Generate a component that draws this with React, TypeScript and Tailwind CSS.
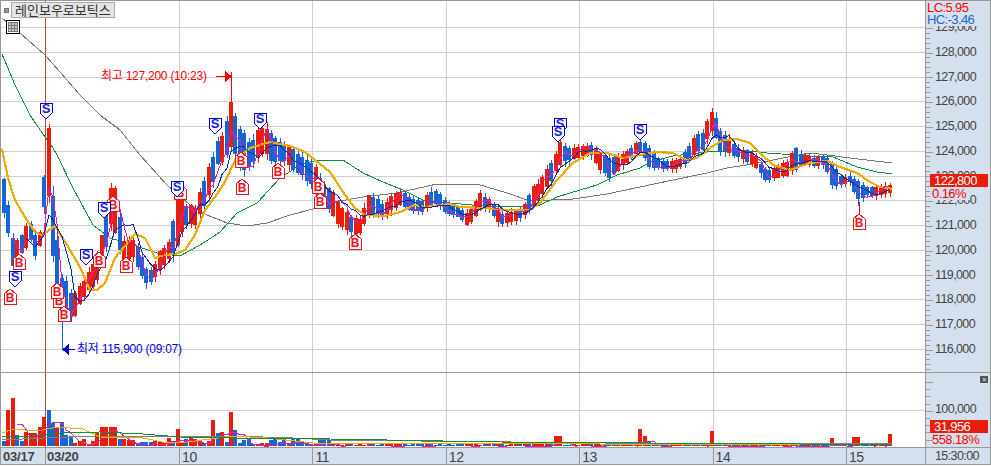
// price chart: traced envelope + seeded candles, all in page coordinates
const RED = "#ea1c0a";
const BLUE = "#1664d6";
const FONT = "font-['Liberation_Sans','Noto_Sans_CJK_KR',sans-serif]";

type P = [number, number];

const env: [number, number, number][] = [
  [2, 172, 212], [7, 190, 225], [9, 212, 248], [13, 235, 268], [19, 242, 258], [26, 225, 248], [31, 222, 240],
  [35, 232, 258], [42, 232, 242], [46, 120, 180], [49, 125, 200], [52, 175, 250], [56, 225, 290], [60, 275, 305],
  [66, 278, 320], [73, 295, 320], [80, 285, 305], [88, 272, 292], [96, 255, 285], [102, 235, 265], [108, 195, 240],
  [113, 178, 222], [118, 200, 250], [124, 238, 262], [132, 236, 258], [138, 245, 270], [146, 268, 285], [153, 268, 282],
  [160, 250, 272], [168, 245, 262], [174, 215, 258], [180, 188, 240], [186, 205, 225], [195, 205, 225], [203, 182, 212],
  [212, 158, 190], [218, 138, 165], [225, 130, 160], [231, 95, 150], [236, 118, 155], [242, 130, 175], [250, 140, 170],
  [257, 130, 160], [265, 120, 155], [272, 135, 165], [282, 142, 162], [292, 148, 170], [303, 155, 178], [313, 160, 190],
  [322, 180, 205], [332, 190, 215], [340, 205, 228], [350, 215, 235], [360, 218, 234], [367, 195, 217], [376, 195, 215],
  [384, 205, 218], [393, 192, 210], [402, 190, 205], [412, 198, 212], [422, 200, 213], [431, 190, 207], [438, 190, 205],
  [448, 203, 215], [458, 205, 217], [467, 212, 226], [473, 205, 222], [480, 192, 210], [490, 200, 210], [500, 212, 226],
  [507, 212, 225], [515, 210, 222], [524, 205, 218], [532, 187, 207], [540, 180, 200], [548, 165, 187], [555, 155, 175],
  [560, 140, 165], [567, 148, 162], [580, 146, 158], [592, 143, 156], [600, 152, 172], [609, 155, 178], [617, 155, 172],
  [625, 152, 165], [635, 142, 155], [642, 140, 152], [648, 145, 167], [660, 160, 170], [672, 160, 170], [682, 157, 167],
  [696, 132, 155], [704, 130, 150], [710, 108, 132], [715, 112, 135], [720, 128, 152], [728, 135, 155], [737, 147, 158],
  [750, 150, 163], [758, 158, 170], [766, 170, 182], [778, 165, 178], [788, 160, 177], [795, 147, 172], [803, 155, 165],
  [815, 157, 167], [825, 155, 166], [831, 162, 188], [842, 177, 184], [850, 175, 183], [858, 180, 202], [868, 187, 196],
  [878, 187, 197], [889, 184, 193],
];

const orange: P[] = [
  [2, 149], [8, 178], [15, 200], [25, 217], [35, 232], [42, 235], [55, 226], [62, 237], [70, 250], [80, 267], [90, 290],
  [97, 290], [105, 283], [115, 258], [120, 252], [135, 234], [145, 238], [155, 258], [165, 255], [175, 254], [185, 250],
  [195, 235], [205, 210], [215, 197], [225, 182], [235, 160], [250, 148], [270, 142], [290, 146], [305, 152], [315, 160],
  [330, 172], [345, 195], [355, 208], [365, 215], [385, 216], [400, 212], [415, 205], [425, 207], [450, 204], [460, 207],
  [485, 208], [505, 210], [530, 210], [540, 203], [557, 180], [573, 163], [590, 153], [607, 153], [623, 158], [640, 155],
  [657, 152], [673, 153], [687, 160], [697, 158], [710, 148], [723, 140], [737, 139], [750, 143], [760, 153], [773, 165],
  [790, 170], [810, 163], [827, 161], [840, 167], [857, 173], [870, 182], [880, 187], [892, 189],
];

const green: P[] = [
  [2, 54], [15, 85], [30, 115], [45, 137], [53, 148], [57, 155], [73, 188], [93, 225], [110, 238], [133, 245], [157, 253],
  [180, 256], [200, 245], [220, 232], [237, 213], [257, 203], [280, 178], [300, 165], [317, 160], [343, 160], [363, 173],
  [383, 182], [403, 190], [423, 200], [450, 203], [483, 206], [513, 207], [540, 205], [557, 197], [580, 190], [597, 185],
  [617, 175], [640, 168], [650, 162], [673, 156], [707, 152], [740, 150], [767, 153], [810, 156], [833, 157], [857, 167],
  [877, 172], [892, 174],
];

const gray: P[] = [
  [2, 18], [20, 33], [45, 55], [60, 72], [80, 95], [100, 115], [120, 130], [140, 155], [167, 185], [190, 205], [207, 215],
  [227, 223], [247, 226], [267, 223], [290, 215], [317, 208], [340, 201], [363, 197], [397, 193], [437, 184], [477, 184],
  [507, 193], [530, 201], [573, 199], [607, 194], [640, 187], [673, 180], [707, 173], [727, 168], [753, 164], [783, 158],
  [810, 153], [827, 155], [850, 158], [892, 163],
];

const volGreen: P[] = [[2, 437], [33, 436], [60, 433], [100, 432], [143, 434], [180, 437], [233, 438], [330, 439], [500, 442], [800, 444], [892, 444]];
const volOrange: P[] = [[2, 433], [13, 429], [37, 431], [57, 427], [83, 429], [100, 437], [143, 438], [167, 443], [187, 442], [233, 436], [267, 438], [313, 443], [330, 443], [600, 444], [892, 445]];
const volGray: P[] = [[2, 440], [43, 438], [100, 436], [143, 436], [233, 436], [293, 438], [330, 440], [600, 443], [892, 444]];

// x, top of bar, red?
const volSpikes: [number, number, boolean][] = [
  [8, 410, true], [11, 398, true], [14, 420, false], [17, 435, false], [25, 432, true], [33, 433, true], [39, 427, true],
  [42, 417, true], [46, 386, true], [49, 410, false], [52, 423, false], [55, 427, true], [59, 420, true], [63, 422, false],
  [67, 435, false], [70, 436, false], [99, 432, true], [104, 427, true], [109, 427, true], [115, 427, true], [179, 429, true],
  [215, 420, true], [218, 433, false], [224, 432, true], [232, 412, true], [235, 430, false], [558, 436, true], [640, 429, true],
  [646, 436, true], [710, 431, true], [833, 438, true], [856, 437, true], [891, 434, true],
];

// colours that matter around the big moves
const forced: [number, number, boolean][] = [
  [44, 47, true], [48, 60, false], [107, 114, true], [226, 231, true], [232, 238, false], [557, 561, true], [705, 712, true], [713, 718, false],
];

const seed = (s: number) => () => {
  s = (s + 0x6d2b79f5) | 0;
  let t = Math.imul(s ^ (s >>> 15), 1 | s);
  t = (t + Math.imul(t ^ (t >>> 7), 61 | t)) ^ t;
  return ((t ^ (t >>> 14)) >>> 0) / 4294967296;
};

const lerpEnv = (x: number) => {
  for (let i = 0; i < env.length - 1; i++) {
    const a = env[i];
    const b = env[i + 1];
    if (x <= b[0]) {
      const t = Math.max(0, (x - a[0]) / (b[0] - a[0]));
      return [a[1] + (b[1] - a[1]) * t, a[2] + (b[2] - a[2]) * t];
    }
  }
  return [env[env.length - 1][1], env[env.length - 1][2]];
};

const rnd = seed(77);
const candles = Array.from({ length: 200 }).map((_, i) => {
  const x = Math.round(2 + i * 4.45);
  const [top, bot] = lerpEnv(x + 2);
  const [pt, pb] = lerpEnv(x - 3);
  const [nt, nb] = lerpEnv(x + 7);
  const rising = nt + nb < pt + pb;
  const f = forced.find((r) => x >= r[0] && x <= r[1]);
  const up = f ? f[2] : rnd() < (rising ? 0.62 : 0.25);
  const h = bot - top;
  const bodyTop = Math.round(top + rnd() * h * 0.14);
  const bodyBot = Math.round(bot - rnd() * h * 0.14);
  return { x, top: Math.round(top - rnd() * 3), bot: Math.round(bot + rnd() * 4), bodyTop, bodyBot, up, close: up ? bodyTop : bodyBot };
});

const ma = (period: number) =>
  candles
    .map((c, i) => {
      if (i < period - 1) return "";
      const s = candles.slice(i - period + 1, i + 1).reduce((a, v) => a + v.close, 0) / period;
      return `${c.x + 2},${s.toFixed(1)}`;
    })
    .filter(Boolean)
    .join(" ");

const volRnd = seed(21);
const volumes = candles.map((c) => {
  const spike = volSpikes.find((s) => Math.abs(s[0] - c.x - 2) <= 2);
  const left = c.x < 330;
  const base = left ? 446 - (2 + volRnd() * 6) : 446 - (1 + volRnd() * 2);
  return { x: c.x, y: spike ? spike[1] : Math.round(base), up: spike ? spike[2] : c.up };
});

const volMa = volumes
  .map((v, i) => {
    if (i < 3) return "";
    const s = volumes.slice(i - 3, i + 1).reduce((a, b) => a + b.y, 0) / 4;
    return `${v.x + 2},${(s + 3).toFixed(1)}`;
  })
  .filter(Boolean)
  .join(" ");

const pts = (a: P[]) => a.map((p) => p.join(",")).join(" ");

const gridX = [179, 312, 446, 579, 713, 846];
const gridY = Array.from({ length: 14 }).map((_, i) => Math.round(27 + i * 24.75));

function SMark({ x, y }: { x: number; y: number }) {
  return (
    <g>
      <polygon points={`${x - 6},${y - 16} ${x + 6},${y - 16} ${x + 6},${y - 6} ${x},${y} ${x - 6},${y - 6}`} fill="#fff" stroke="#0000e0" />
      <text x={x} y={y - 6} textAnchor="middle" fontSize="13" fontWeight="700" fill="#1a1ae6">S</text>
    </g>
  );
}

function BMark({ x, y, stem }: { x: number; y: number; stem?: number }) {
  return (
    <g>
      {stem ? <line x1={x} x2={x} y1={stem} y2={y} stroke="#f00" /> : null}
      <polygon points={`${x},${y} ${x + 6},${y + 5} ${x + 6},${y + 15} ${x - 6},${y + 15} ${x - 6},${y + 5}`} fill="#fff" stroke="#f0101a" />
      <text x={x} y={y + 13} textAnchor="middle" fontSize="12" fontWeight="700" fill="#f0101a">B</text>
    </g>
  );
}

function PriceChart() {
  return (
    <svg viewBox="1 1 924 371" className="block w-[924px] h-[371px]" shapeRendering="crispEdges">
      {gridY.map((y) => (
        <line key={y} x1="1" x2="925" y1={y + 0.5} y2={y + 0.5} stroke="#d0d0d0" />
      ))}
      {gridX.map((x) => (
        <line key={x} x1={x + 0.5} x2={x + 0.5} y1="1" y2="372" stroke="#d0d0d0" />
      ))}
      <line x1="45.5" x2="45.5" y1="1" y2="372" stroke="#d04030" />
      <polyline points={pts(gray)} fill="none" stroke="#777" strokeWidth="1" />
      <polyline points={pts(green)} fill="none" stroke="#0f8f3c" strokeWidth="1" />
      {candles.map((c, i) => (
        <g key={i} fill={c.up ? RED : BLUE}>
          <rect x={c.x + 1.5} y={c.top} width="1" height={c.bot - c.top} />
          <rect x={c.x} y={c.bodyTop} width="4" height={Math.max(3, c.bodyBot - c.bodyTop)} />
        </g>
      ))}
      <polyline points={pts(orange)} fill="none" stroke="#f0ab00" strokeWidth="2.2" />
      <polyline points={ma(3)} fill="none" stroke="#e020b0" strokeWidth="1" />
      <polyline points={ma(6)} fill="none" stroke="#0a2ca0" strokeWidth="1" />

      {/* high / low callouts */}
      <line x1="231.5" x2="231.5" y1="72" y2="96" stroke="#f00" />
      <line x1="216" x2="226" y1="76.5" y2="76.5" stroke="#f00" />
      <polygon points="225,71 232,76.5 225,82" fill="#f00" />
      <text x="101" y="80" fontSize="12" letterSpacing="-0.25" fill="#f00">최고 127,200 (10:23)</text>
      <line x1="62.5" x2="62.5" y1="320" y2="350" stroke={BLUE} />
      <line x1="65" x2="75" y1="349.5" y2="349.5" stroke="#0000e0" />
      <polygon points="69,344 62,349.5 69,355" fill="#0000e0" />
      <text x="77" y="353" fontSize="12" letterSpacing="-0.25" fill="#0000e0">최저 115,900 (09:07)</text>

      <BMark x={180} y={184} />
      <BMark x={113} y={196} />
      <BMark x={59} y={292} />
      <BMark x={64} y={306} />
      <BMark x={10} y={289} />
      <BMark x={19} y={254} />
      <BMark x={57} y={283} />
      <BMark x={99} y={252} />
      <BMark x={126} y={257} />
      <BMark x={241} y={152} />
      <BMark x={242} y={179} />
      <BMark x={278} y={163} />
      <BMark x={318} y={178} />
      <BMark x={320} y={193} />
      <BMark x={355} y={234} />
      <BMark x={859} y={214} stem={202} />
      <SMark x={46} y={119} />
      <SMark x={215} y={134} />
      <SMark x={260} y={129} />
      <SMark x={177} y={197} />
      <SMark x={104} y={218} />
      <SMark x={86} y={265} />
      <SMark x={15} y={287} />
      <SMark x={560} y={134} />
      <SMark x={558} y={142} />
      <SMark x={640} y={140} />
    </svg>
  );
}

function VolumeChart() {
  return (
    <svg viewBox="1 373 924 74" className="block w-[924px] h-[74px]" shapeRendering="crispEdges">
      <line x1="1" x2="925" y1="410.5" y2="410.5" stroke="#d0d0d0" />
      {gridX.map((x) => (
        <line key={x} x1={x + 0.5} x2={x + 0.5} y1="373" y2="447" stroke="#d0d0d0" />
      ))}
      <line x1="45.5" x2="45.5" y1="373" y2="447" stroke="#d04030" />
      {volumes.map((v, i) => (
        <rect key={i} x={v.x} y={v.y} width="4" height={446 - v.y} fill={v.up ? RED : BLUE} />
      ))}
      <polyline points={volMa} fill="none" stroke="#e020b0" strokeWidth="1" />
      <polyline points={pts(volGray)} fill="none" stroke="#808080" strokeWidth="1" />
      <polyline points={pts(volOrange)} fill="none" stroke="#f0ab00" strokeWidth="1" />
      <polyline points={pts(volGreen)} fill="none" stroke="#0f8f3c" strokeWidth="1" />
    </svg>
  );
}

function AxisTicks({ from, to, step, major }: { from: number; to: number; step: number; major: number }) {
  const n = Math.floor((to - from) / step);
  return (
    <svg className="absolute inset-0 w-[8px] h-full" shapeRendering="crispEdges">
      {Array.from({ length: n + 1 }).map((_, i) => {
        const y = Math.round(from + i * step);
        return <line key={i} x1="0" x2={i % major === 0 ? 7 : 4} y1={y + 0.5} y2={y + 0.5} stroke="#999" />;
      })}
    </svg>
  );
}

const prices = ["129,000", "128,000", "127,000", "126,000", "125,000", "124,000", "123,000", "122,000", "121,000", "120,000", "119,000", "118,000", "117,000", "116,000"];
const days = ["10", "11", "12", "13", "14", "15"];

export default function App() {
  return (
    <div className={`w-[991px] h-[466px] flex flex-col overflow-hidden bg-white text-[#444] text-[12px] leading-none ${FONT}`}>
      <div className="flex border-t border-l border-r border-[#999] h-[465px]">
        <div className="w-[924px] flex flex-col relative">
          <PriceChart />
          <div className="h-px bg-[#999]" />
          <VolumeChart />
          <div className="flex flex-1 bg-[#d5e0ee] border-t border-[#999] text-[13px] border-b">
            <div className="w-[44px] pl-[2px] pt-[2px] font-bold tracking-[-0.2px]">03/17</div>
            <div className="w-[134px] border-l border-[#999] pl-[1px] pt-[2px] font-bold tracking-[-0.2px]">03/20</div>
            {days.map((d, i) => (
              <div key={d} className={`border-l border-[#999] pl-[2px] pt-[2px] text-[14px] tracking-[-0.4px] ${i === 5 ? "flex-1" : "w-[133.4px]"}`}>{d}</div>
            ))}
          </div>

          <div className="absolute left-[3px] top-[1px] flex items-center gap-[2px]">
            <div className="w-[5px] h-[5px] bg-[#999] border border-[#777]" />
            <div className="h-[16px] px-[3px] flex items-center bg-[#e4e4e4] border border-[#aaa] text-[13px] text-[#333]">레인보우로보틱스</div>
          </div>
          <div className="absolute left-[5px] top-[19px] w-[14px] h-[14px] border border-black bg-white p-px">
            <div className="w-full h-full grid grid-cols-3 grid-rows-3 gap-px bg-[#777] border border-[#777]">
              {Array.from({ length: 9 }).map((_, i) => (
                <div key={i} className="bg-[#ccc]" />
              ))}
            </div>
          </div>
        </div>

        <div className="flex-1 flex flex-col border-l border-[#999] bg-[#d5e0ee] tracking-[-0.6px] relative">
          <div className="relative h-[371px] pt-[14px] pl-[9px]">
            <AxisTicks from={2} to={370} step={4.95} major={5} />
            {prices.map((p) => (
              <div key={p} className="h-[24.75px] flex items-center text-[12.5px]">{p}</div>
            ))}
            <div className="absolute left-0 right-0 top-0 h-[25px] bg-[#d5e0ee] pl-px pt-px text-[13px] leading-[12px]">
              <div className="text-[#f00]">LC:5.95</div>
              <div className="text-[#1664d6]">HC:-3.46</div>
            </div>
            <div className="absolute left-[4px] top-[173px] w-[58px] h-[13px] bg-[#ea1c0a] text-white text-[13px] pl-[4px] flex items-center">122,800</div>
            <div className="absolute left-[6px] top-[186px] h-[13px] bg-[#d5e0ee] text-[#f00] text-[13px] pr-1 flex items-center">0.16%</div>
          </div>
          <div className="relative h-[75px] border-t border-[#999] pt-[30px] pl-[9px]">
            <AxisTicks from={9} to={73} step={7.2} major={4} />
            <div className="h-[13px] flex items-center text-[12.5px]">100,000</div>
            <div className="absolute left-[4px] top-[47px] w-[58px] h-[13px] bg-[#ea1c0a] text-white text-[13px] pl-[4px] flex items-center">31,956</div>
            <div className="absolute left-[6px] top-[60px] h-[13px] text-[#f00] text-[13px] flex items-center">558.18%</div>
            <div className="absolute left-[54px] top-[3px] w-[8px] h-[7px] bg-[#555] text-white text-[7px] flex items-center justify-center">×</div>
          </div>
          <div className="flex-1 border-t border-b border-[#999] pl-[9px] flex items-center text-[12.5px]">15:30:00</div>
        </div>
      </div>
    </div>
  );
}
